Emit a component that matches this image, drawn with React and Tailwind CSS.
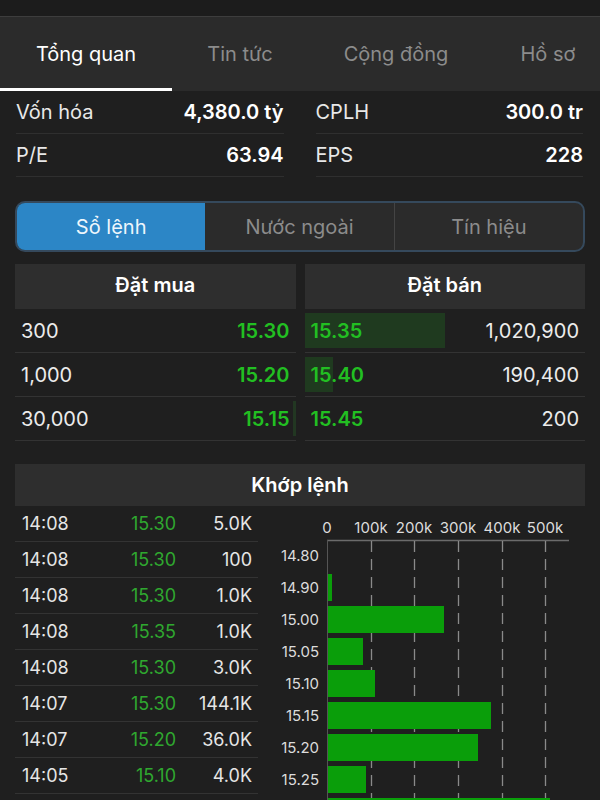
import React from 'react';

const TABS = [
  { label: 'Tổng quan', w: 'w-[172px]', active: true },
  { label: 'Tin tức', w: 'w-[136px]' },
  { label: 'Cộng đồng', w: 'w-[176px]' },
  { label: 'Hồ sơ', w: 'w-[128px]' },
];

const BOOK = [
  { bq: '300', bp: '15.30', bBar: 0, sp: '15.35', sq: '1,020,900', sBar: 140 },
  { bq: '1,000', bp: '15.20', bBar: 0, sp: '15.40', sq: '190,400', sBar: 28 },
  { bq: '30,000', bp: '15.15', bBar: 3, sp: '15.45', sq: '200', sBar: 0 },
];

const TRADES = [
  ['14:08', '15.30', '5.0K'],
  ['14:08', '15.30', '100'],
  ['14:08', '15.30', '1.0K'],
  ['14:08', '15.35', '1.0K'],
  ['14:08', '15.30', '3.0K'],
  ['14:07', '15.30', '144.1K'],
  ['14:07', '15.20', '36.0K'],
  ['14:05', '15.10', '4.0K'],
];

// last row is only partly visible, its label falls below the fold
const VOL = [
  ['14.80', 0], ['14.90', 4], ['15.00', 116], ['15.05', 35],
  ['15.10', 47], ['15.15', 163], ['15.20', 150], ['15.25', 38], [null, 222],
];

function Stat({ label, value }) {
  return (
    <div className="flex items-center justify-between h-[43px] border-b border-[#2f2f2f]">
      <span className="text-[20px] text-[#e8e8e8]">{label}</span>
      <span className="text-[20px] font-semibold text-white">{value}</span>
    </div>
  );
}

function VolumeChart() {
  const ticks = [69, 113, 156, 200, 244, 287];
  const names = ['0', '100k', '200k', '300k', '400k', '500k'];
  return (
    <svg width="326" height="295" className="block">
      {names.map((n, i) => (
        <text key={n} x={ticks[i]} y="27" fill="#dcdcdc" fontSize="15" textAnchor="middle" fontFamily="Inter, sans-serif">{n}</text>
      ))}
      <line x1="69" y1="34.5" x2="311" y2="34.5" stroke="#6b6b6b" strokeWidth="1.5" />
      <line x1="69.5" y1="34" x2="69.5" y2="295" stroke="#555" strokeWidth="1" />
      {ticks.slice(1).map((x) => (
        <line key={x} x1={x + 0.5} y1="35" x2={x + 0.5} y2="295" stroke="#8a8a8a" strokeWidth="1.3" strokeDasharray="11 7" />
      ))}
      {VOL.map(([p, w], i) => (
        <g key={i}>
          {p && <text x="61" y={36 + 32 * i + 19} fill="#dcdcdc" fontSize="15" textAnchor="end" fontFamily="Inter, sans-serif">{p}</text>}
          {w > 0 && <rect x="70" y={36 + 32 * i} width={w} height="27" fill="#0a9e0a" />}
        </g>
      ))}
    </svg>
  );
}

export default function App() {
  return (
    <div className="w-[600px] h-[800px] overflow-hidden bg-[#1f1f1f] font-['Inter',sans-serif] text-white">
      {/* status strip */}
      <div className="h-[17px] bg-[#1c1c1c] border-b border-[#3d3d3d]" />

      {/* top tabs */}
      <div className="flex h-[74px] bg-[#2b2b2b] whitespace-nowrap">
        {TABS.map((t) => (
          <div key={t.label} className={`${t.w} shrink-0 flex flex-col`}>
            <div className={`flex-1 flex items-center justify-center pt-[2px] text-[20px] ${t.active ? 'text-white' : 'text-[#8c8c8c]'}`}>
              {t.label}
            </div>
            <div className={`h-[3px] ${t.active ? 'bg-white' : ''}`} />
          </div>
        ))}
      </div>

      {/* key stats */}
      <div className="grid grid-cols-2 gap-x-[32px] pl-[16px] pr-[17px]">
        <Stat label="Vốn hóa" value="4,380.0 tỷ" />
        <Stat label="CPLH" value="300.0 tr" />
        <Stat label="P/E" value="63.94" />
        <Stat label="EPS" value="228" />
      </div>

      {/* segmented control */}
      <div className="mx-[15px] mt-[24px] h-[51px] flex rounded-[10px] border-2 border-[#35495c] overflow-hidden bg-[#2b2b2b]">
        <div className="flex-1 flex items-center justify-center bg-[#2c86c6] text-[20px] text-[#eef6fc]">Sổ lệnh</div>
        <div className="flex-1 flex items-center justify-center text-[20px] text-[#8c8c8c] border-r border-[#444]">Nước ngoài</div>
        <div className="flex-1 flex items-center justify-center text-[20px] text-[#8c8c8c]">Tín hiệu</div>
      </div>

      {/* order book */}
      <div className="mx-[15px] mt-[12px] grid grid-cols-2 gap-x-[9px]">
        <div className="h-[45px] flex items-center justify-center pb-[4px] bg-[#2e2e2e] text-[20px] font-semibold">Đặt mua</div>
        <div className="h-[45px] flex items-center justify-center pb-[4px] bg-[#2e2e2e] text-[20px] font-semibold">Đặt bán</div>
        {BOOK.map((r) => (
          <React.Fragment key={r.bq}>
            <div className="relative h-[44px] flex items-center justify-between px-[6px] border-b border-[#333]">
              {r.bBar > 0 && <div className="absolute right-0 top-[4px] bottom-[4px] bg-[#223722]" style={{ width: r.bBar }} />}
              <span className="relative text-[20px] text-[#ececec]">{r.bq}</span>
              <span className="relative text-[20px] font-semibold text-[#22bf22]">{r.bp}</span>
            </div>
            <div className="relative h-[44px] flex items-center justify-between px-[6px] border-b border-[#333]">
              {r.sBar > 0 && <div className="absolute left-0 top-[4px] bottom-[4px] bg-[#1f3a1f]" style={{ width: r.sBar }} />}
              <span className="relative text-[20px] font-semibold text-[#22bf22]">{r.sp}</span>
              <span className="relative text-[20px] text-[#ececec]">{r.sq}</span>
            </div>
          </React.Fragment>
        ))}
      </div>

      {/* matched orders */}
      <div className="mx-[15px] mt-[23px] h-[42px] flex items-center justify-center bg-[#2e2e2e] text-[20px] font-semibold">
        Khớp lệnh
      </div>
      <div className="ml-[15px] flex">
        <div className="w-[243px] shrink-0">
          {TRADES.map(([t, p, v], i) => (
            <div key={i} className="h-[36px] flex items-center border-b border-[#333] text-[18px]">
              <span className="w-[82px] pl-[7px] text-[#e6e6e6]">{t}</span>
              <span className="w-[79px] text-right text-[#2fa82f]">{p}</span>
              <span className="flex-1 text-right pr-[6px] text-[#e6e6e6]">{v}</span>
            </div>
          ))}
        </div>
        <VolumeChart />
      </div>
    </div>
  );
}
